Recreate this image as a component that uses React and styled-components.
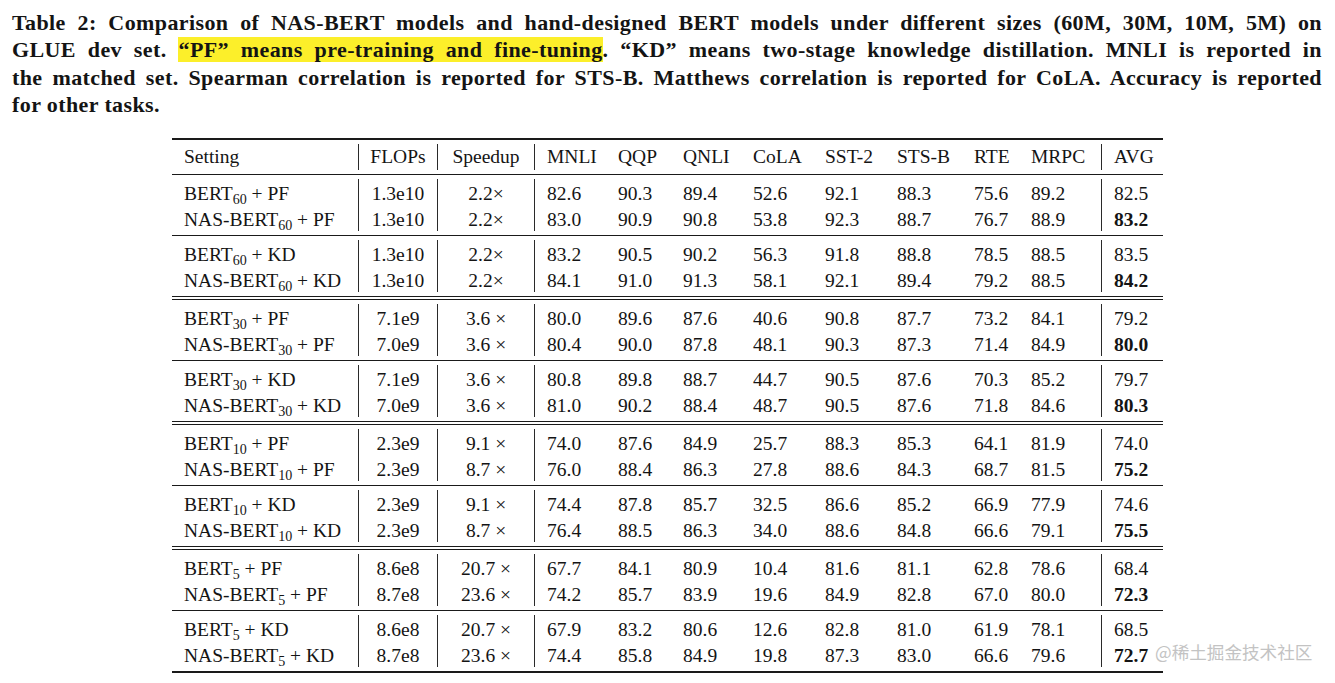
import React from "react";
import styled, { createGlobalStyle } from "styled-components";

const GlobalStyle = createGlobalStyle`
  html, body {
    margin: 0;
    padding: 0;
    background: #fff;
  }
`;

const columns = [
  { name: "Setting", width: 186, align: "left" },
  { name: "FLOPs", width: 79, align: "center", rule: true },
  { name: "Speedup", width: 97, align: "center", rule: true },
  { name: "MNLI", width: 72, rule: true },
  { name: "QQP", width: 65 },
  { name: "QNLI", width: 70 },
  { name: "CoLA", width: 72 },
  { name: "SST-2", width: 72 },
  { name: "STS-B", width: 77 },
  { name: "RTE", width: 57 },
  { name: "MRPC", width: 82 },
  { name: "AVG", width: 62, rule: true },
];

const groups = [
  {
    sep: "single",
    size: "60",
    kind: "PF",
    flops: ["1.3e10", "1.3e10"],
    speed: ["2.2×", "2.2×"],
    rows: [
      ["82.6", "90.3", "89.4", "52.6", "92.1", "88.3", "75.6", "89.2", "82.5"],
      ["83.0", "90.9", "90.8", "53.8", "92.3", "88.7", "76.7", "88.9", "83.2"],
    ],
  },
  {
    sep: "single",
    size: "60",
    kind: "KD",
    flops: ["1.3e10", "1.3e10"],
    speed: ["2.2×", "2.2×"],
    rows: [
      ["83.2", "90.5", "90.2", "56.3", "91.8", "88.8", "78.5", "88.5", "83.5"],
      ["84.1", "91.0", "91.3", "58.1", "92.1", "89.4", "79.2", "88.5", "84.2"],
    ],
  },
  {
    sep: "double",
    size: "30",
    kind: "PF",
    flops: ["7.1e9", "7.0e9"],
    speed: ["3.6 ×", "3.6 ×"],
    rows: [
      ["80.0", "89.6", "87.6", "40.6", "90.8", "87.7", "73.2", "84.1", "79.2"],
      ["80.4", "90.0", "87.8", "48.1", "90.3", "87.3", "71.4", "84.9", "80.0"],
    ],
  },
  {
    sep: "single",
    size: "30",
    kind: "KD",
    flops: ["7.1e9", "7.0e9"],
    speed: ["3.6 ×", "3.6 ×"],
    rows: [
      ["80.8", "89.8", "88.7", "44.7", "90.5", "87.6", "70.3", "85.2", "79.7"],
      ["81.0", "90.2", "88.4", "48.7", "90.5", "87.6", "71.8", "84.6", "80.3"],
    ],
  },
  {
    sep: "double",
    size: "10",
    kind: "PF",
    flops: ["2.3e9", "2.3e9"],
    speed: ["9.1 ×", "8.7 ×"],
    rows: [
      ["74.0", "87.6", "84.9", "25.7", "88.3", "85.3", "64.1", "81.9", "74.0"],
      ["76.0", "88.4", "86.3", "27.8", "88.6", "84.3", "68.7", "81.5", "75.2"],
    ],
  },
  {
    sep: "single",
    size: "10",
    kind: "KD",
    flops: ["2.3e9", "2.3e9"],
    speed: ["9.1 ×", "8.7 ×"],
    rows: [
      ["74.4", "87.8", "85.7", "32.5", "86.6", "85.2", "66.9", "77.9", "74.6"],
      ["76.4", "88.5", "86.3", "34.0", "88.6", "84.8", "66.6", "79.1", "75.5"],
    ],
  },
  {
    sep: "double",
    size: "5",
    kind: "PF",
    flops: ["8.6e8", "8.7e8"],
    speed: ["20.7 ×", "23.6 ×"],
    rows: [
      ["67.7", "84.1", "80.9", "10.4", "81.6", "81.1", "62.8", "78.6", "68.4"],
      ["74.2", "85.7", "83.9", "19.6", "84.9", "82.8", "67.0", "80.0", "72.3"],
    ],
  },
  {
    sep: "single",
    size: "5",
    kind: "KD",
    flops: ["8.6e8", "8.7e8"],
    speed: ["20.7 ×", "23.6 ×"],
    rows: [
      ["67.9", "83.2", "80.6", "12.6", "82.8", "81.0", "61.9", "78.1", "68.5"],
      ["74.4", "85.8", "84.9", "19.8", "87.3", "83.0", "66.6", "79.6", "72.7"],
    ],
  },
];

const Page = styled.div`
  position: relative;
  width: 1335px;
  height: 683px;
  overflow: hidden;
  background: #fff;
  color: #141414;
`;

const Caption = styled.div`
  padding: 9px 13px 0 12px;
  font-family: "Liberation Serif", "DejaVu Serif", serif;
  font-weight: 700;
  font-size: 22px;
  letter-spacing: 0.4px;
  line-height: 27.3px;
`;

const CaptionLine = styled.div`
  text-align: ${(p) => (p.$last ? "left" : "justify")};
  text-align-last: ${(p) => (p.$last ? "left" : "justify")};
`;

const Mark = styled.span`
  background: #fcef2a;
`;

const Table = styled.div`
  width: 991px;
  margin: 20px auto 0;
  border-top: 2px solid #1a1a1a;
  border-bottom: 2px solid #1a1a1a;
  font-family: "Liberation Serif", "DejaVu Serif", serif;
  font-size: 19.5px;
`;

const Section = styled.div`
  padding: 4px 0;
  border-top: ${(p) =>
    p.$sep === "double"
      ? "4px double #1a1a1a"
      : p.$sep === "single"
      ? "1px solid #1a1a1a"
      : "none"};
`;

const Grid = styled.div`
  display: grid;
  grid-template-columns: ${columns.map((c) => `${c.width}px`).join(" ")};
`;

const Column = styled.div`
  display: flex;
  flex-direction: column;
  border-left: ${(p) => (p.$rule ? "1px solid #2a2a2a" : "none")};
`;

const Cell = styled.div`
  box-sizing: border-box;
  height: 26px;
  line-height: 26px;
  padding-top: ${(p) => (p.$head ? "0" : "2px")};
  white-space: nowrap;
  text-align: ${(p) => p.$align || "left"};
  padding-left: ${(p) => (p.$align === "center" ? "0" : "12px")};
  font-weight: ${(p) => (p.$bold ? 700 : 400)};
`;

const Sub = styled.sub`
  font-size: 0.72em;
  line-height: 0;
  vertical-align: -0.25em;
`;

const Watermark = styled.div`
  position: absolute;
  left: 1155px;
  top: 641px;
  font-family: "Noto Sans CJK SC", "Noto Sans", sans-serif;
  font-size: 17.6px;
  line-height: 22px;
  color: #c3c3c3;
  white-space: nowrap;
`;

function Setting({ nas, size, kind }) {
  return (
    <>
      {nas ? "NAS-BERT" : "BERT"}
      <Sub>{size}</Sub> + {kind}
    </>
  );
}

function Group({ group }) {
  const cols = columns.map((col, i) => {
    let cells;
    if (i === 0) {
      cells = [false, true].map((nas) => (
        <Cell key={String(nas)}>
          <Setting nas={nas} size={group.size} kind={group.kind} />
        </Cell>
      ));
    } else if (i === 1) {
      cells = group.flops.map((v, r) => (
        <Cell key={r} $align="center">
          {v}
        </Cell>
      ));
    } else if (i === 2) {
      cells = group.speed.map((v, r) => (
        <Cell key={r} $align="center">
          {v}
        </Cell>
      ));
    } else {
      cells = group.rows.map((row, r) => (
        <Cell key={r} $bold={i === columns.length - 1 && r === 1}>
          {row[i - 3]}
        </Cell>
      ));
    }
    return (
      <Column key={col.name} $rule={col.rule}>
        {cells}
      </Column>
    );
  });
  return (
    <Section $sep={group.sep}>
      <Grid>{cols}</Grid>
    </Section>
  );
}

export default function App() {
  return (
    <Page>
      <GlobalStyle />
      <Caption>
        <CaptionLine>
          Table 2: Comparison of NAS-BERT models and hand-designed BERT models
          under different sizes (60M, 30M, 10M, 5M) on
        </CaptionLine>
        <CaptionLine>
          GLUE dev set. <Mark>“PF” means pre-training and fine-tuning</Mark>.
          “KD” means two-stage knowledge distillation. MNLI is reported in
        </CaptionLine>
        <CaptionLine>
          the matched set. Spearman correlation is reported for STS-B. Matthews
          correlation is reported for CoLA. Accuracy is reported
        </CaptionLine>
        <CaptionLine $last>for other tasks.</CaptionLine>
      </Caption>
      <Table>
        <Section>
          <Grid>
            {columns.map((col) => (
              <Column key={col.name} $rule={col.rule}>
                <Cell $head $align={col.align}>
                  {col.name}
                </Cell>
              </Column>
            ))}
          </Grid>
        </Section>
        {groups.map((g, i) => (
          <Group key={i} group={g} />
        ))}
      </Table>
      <Watermark>@稀土掘金技术社区</Watermark>
    </Page>
  );
}
